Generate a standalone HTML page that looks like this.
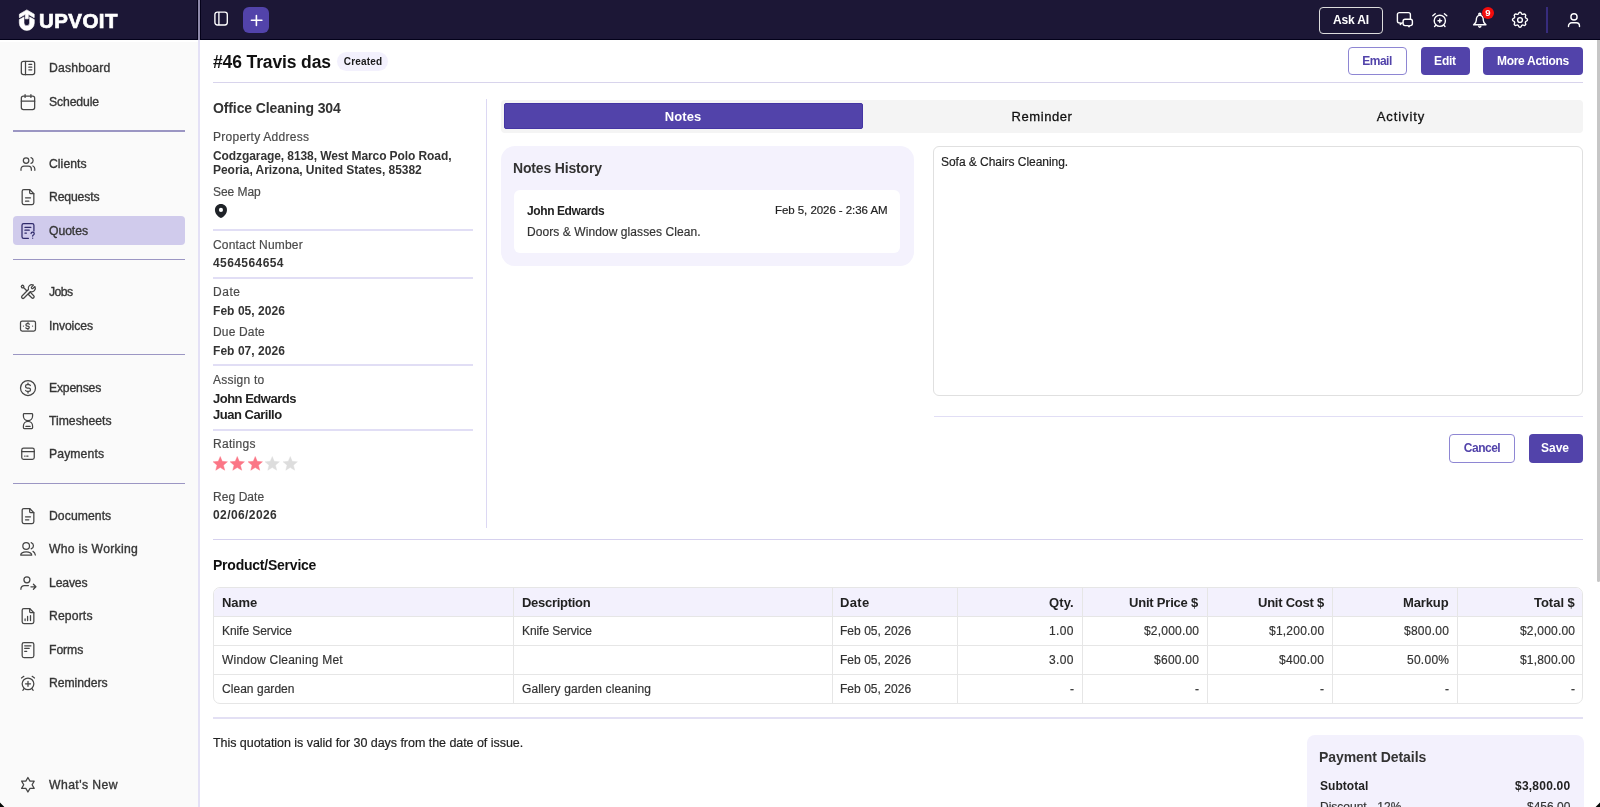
<!DOCTYPE html>
<html><head><meta charset="utf-8"><title>Quote #46</title>
<style>
html,body{margin:0;padding:0;}
body{width:1600px;height:807px;overflow:hidden;position:relative;background:#fff;font-family:"Liberation Sans", sans-serif;}
.t{position:absolute;line-height:1;white-space:nowrap;will-change:transform;}
.b{position:absolute;}
.s{position:absolute;overflow:visible;}
</style></head><body>
<div class="b" style="left:0px;top:0px;width:1600px;height:40px;background:#1c1736;"></div>
<div class="b" style="left:0px;top:39px;width:1600px;height:1px;background:#03011a;"></div>
<div class="b" style="left:197px;top:0px;width:4px;height:40px;background:#05021a;"></div>
<div class="b" style="left:198px;top:0px;width:2px;height:40px;background:#8e89aa;"></div>
<svg class="s" style="left:0px;top:0px;" width="60" height="40" viewBox="0 0 60 40" fill="none"><path fill="#fff" stroke="#fff" stroke-width="0.7" stroke-linejoin="round" d="M26.8 9.9 L34.2 14.2 L34.2 17.7 L28.3 14.3 L28.3 18.8 L25.3 18.8 L25.3 14.3 L19.4 17.7 L19.4 14.2 Z"/>
<path fill="#fff" stroke="#fff" stroke-width="0.6" stroke-linejoin="round" d="M19.3 19.6 L24 16.9 L24 22.9 A2.8 2.8 0 0 0 29.6 22.9 L29.6 16.9 L34.3 19.6 L34.3 22.9 A7.5 7.5 0 0 1 19.3 22.9 Z"/></svg>
<div class="t" style="left:39.20px;top:10.65px;font-size:20.5px;font-weight:700;color:#fff;letter-spacing:0.434px;-webkit-text-stroke:0.7px #fff;">UPVOIT</div>
<svg class="s" style="left:211px;top:9px;" width="20" height="20" viewBox="0 0 20 20" fill="none"><rect x="3.9" y="3.1" width="12.4" height="12.9" rx="2.4" stroke="#fff" stroke-width="1.35"/><path d="M7.9 3.1v12.9" stroke="#fff" stroke-width="1.35"/></svg>
<div class="b" style="left:242.7px;top:6.9px;width:26.4px;height:26.6px;background:#5243aa;border-radius:6px;"></div>
<svg class="s" style="left:242.7px;top:6.9px;" width="27" height="27" viewBox="0 0 27 27" fill="none"><path d="M13.4 8.6v9.9M8.4 13.2h10.5" stroke="#fff" stroke-width="1.6" stroke-linecap="round"/></svg>
<div class="b" style="left:1319px;top:7px;width:64px;height:27px;border:1.5px solid #dcdcdc;border-radius:4px;box-sizing:border-box;"></div>
<div class="t" style="left:1050.93px;width:600px;text-align:center;top:14.24px;font-size:12px;font-weight:700;color:#fff;letter-spacing:-0.141px;">Ask AI</div>
<svg class="s" style="left:1394px;top:10px;" width="20" height="20" viewBox="0 0 20 20" fill="none"><path stroke="#fff" stroke-width="1.4" stroke-linecap="round" stroke-linejoin="round" d="M5.4 2.6h9a2 2 0 0 1 2 2v6.3a2 2 0 0 1-2 2h-6.6l-1.5 1.5v-1.5h-0.9a2 2 0 0 1-2-2v-6.3a2 2 0 0 1 2-2z"/><path stroke="#fff" stroke-width="1.4" stroke-linecap="round" stroke-linejoin="round" d="M11.1 9.3h5.3a2 2 0 0 1 2 2v2.3a2 2 0 0 1-2 2h-0.7l-0.6 1.2l-1.2-1.2h-2.8a2 2 0 0 1-2-2v-2.3a2 2 0 0 1 2-2z" fill="#1c1736"/></svg>
<svg class="s" style="left:1430px;top:10px;" width="20" height="20" viewBox="0 0 20 20" fill="none"><circle stroke="#fff" stroke-width="1.4" stroke-linecap="round" stroke-linejoin="round" cx="9.8" cy="10.8" r="5.6"/><path stroke="#fff" stroke-width="1.4" stroke-linecap="round" stroke-linejoin="round" d="M9.8 9v3.6M8 10.8h3.6M2.8 5.8l2.4-2M16.8 5.8l-2.4-2M5.8 15.1l-1.2 1.4M13.8 15.1l1.2 1.4"/></svg>
<svg class="s" style="left:1470px;top:10px;" width="20" height="20" viewBox="0 0 20 20" fill="none"><path stroke="#fff" stroke-width="1.4" stroke-linecap="round" stroke-linejoin="round" d="M9.8 5.4C6.9 5.4 6.3 8 6.3 10.3C6.3 12.4 5.3 13.7 3.6 14.8H16C14.3 13.7 13.3 12.4 13.3 10.3C13.3 8 12.7 5.4 9.8 5.4Z"/><circle stroke="#fff" stroke-width="1.4" stroke-linecap="round" stroke-linejoin="round" cx="9.8" cy="4.2" r="1"/><path stroke="#fff" stroke-width="1.4" stroke-linecap="round" stroke-linejoin="round" d="M8.7 16.1a1.1 1.1 0 0 0 2.2 0"/></svg>
<div class="b" style="left:1481.6px;top:6.6px;width:12px;height:12px;border-radius:50%;background:#f20c0c;"></div>
<div class="t" style="left:1187.60px;width:600px;text-align:center;top:8.26px;font-size:9.5px;font-weight:700;color:#fff;">9</div>
<svg class="s" style="left:1510px;top:10px;" width="20" height="20" viewBox="0 0 20 20" fill="none"><path stroke="#fff" stroke-width="1.4" stroke-linecap="round" stroke-linejoin="round" d="M8.6 3.3c.36-1.47 2.44-1.47 2.8 0a1.44 1.44 0 0 0 2.15.89c1.29-.79 2.77.68 1.98 1.98a1.44 1.44 0 0 0 .89 2.15c1.47.36 1.47 2.44 0 2.8a1.44 1.44 0 0 0-.89 2.15c.79 1.29-.68 2.77-1.98 1.98a1.44 1.44 0 0 0-2.15.89c-.36 1.47-2.44 1.47-2.8 0a1.44 1.44 0 0 0-2.15-.89c-1.29.79-2.77-.68-1.98-1.98a1.44 1.44 0 0 0-.89-2.15c-1.47-.36-1.47-2.44 0-2.8a1.44 1.44 0 0 0 .89-2.15c-.79-1.29.68-2.77 1.98-1.98c.83.51 1.91.06 2.15-.89z"/><circle stroke="#fff" stroke-width="1.4" stroke-linecap="round" stroke-linejoin="round" cx="10" cy="10" r="2.4"/></svg>
<div class="b" style="left:1546px;top:6.9px;width:2px;height:26.6px;background:#372c7d;"></div>
<svg class="s" style="left:1564px;top:10px;" width="20" height="20" viewBox="0 0 20 20" fill="none"><circle stroke="#fff" stroke-width="1.4" stroke-linecap="round" stroke-linejoin="round" cx="10" cy="6.9" r="3.1"/><path stroke="#fff" stroke-width="1.4" stroke-linecap="round" stroke-linejoin="round" d="M4.5 16.6v-0.7a3.2 3.2 0 0 1 3.2-3.2h4.6a3.2 3.2 0 0 1 3.2 3.2v0.7"/></svg>
<div class="b" style="left:0px;top:40px;width:198px;height:2px;background:#fff;"></div>
<div class="b" style="left:0px;top:42px;width:198px;height:765px;background:#fafafa;"></div>
<div class="b" style="left:198px;top:40px;width:2px;height:767px;background:#e4e1f6;"></div>
<div class="b" style="left:12.5px;top:215.5px;width:172.5px;height:29.5px;background:#d0cbec;border-radius:4px;"></div>
<div class="b" style="left:12.5px;top:130px;width:172.5px;height:1.7px;background:#9b96c3;"></div>
<div class="b" style="left:12.5px;top:258.5px;width:172.5px;height:1.7px;background:#9b96c3;"></div>
<div class="b" style="left:12.5px;top:353.5px;width:172.5px;height:1.7px;background:#9b96c3;"></div>
<div class="b" style="left:12.5px;top:482.5px;width:172.5px;height:1.7px;background:#9b96c3;"></div>
<svg class="s" style="left:17.5px;top:58.400000000000006px;" width="20" height="20" viewBox="0 0 24 24" fill="none"><rect stroke="#454545" stroke-width="1.5" stroke-linecap="round" stroke-linejoin="round" x="4" y="4" width="16" height="16" rx="2.5"/><path stroke="#454545" stroke-width="1.5" stroke-linecap="round" stroke-linejoin="round" d="M9 4v16M13 7.5h3.5M13 11h3.5M13 14.2h3.5"/></svg>
<div class="t" style="left:49.40px;top:62.47px;font-size:12.2px;font-weight:400;color:#363636;letter-spacing:0.222px;-webkit-text-stroke:0.35px #363636;">Dashboard</div>
<svg class="s" style="left:17.5px;top:92px;" width="20" height="20" viewBox="0 0 24 24" fill="none"><rect stroke="#454545" stroke-width="1.5" stroke-linecap="round" stroke-linejoin="round" x="4" y="5" width="16" height="16" rx="2.5"/><path stroke="#454545" stroke-width="1.5" stroke-linecap="round" stroke-linejoin="round" d="M8.5 3v3.5M15.5 3v3.5M4 11h16"/></svg>
<div class="t" style="left:49.40px;top:96.07px;font-size:12.2px;font-weight:400;color:#363636;letter-spacing:-0.118px;-webkit-text-stroke:0.35px #363636;">Schedule</div>
<svg class="s" style="left:17.5px;top:153.5px;" width="20" height="20" viewBox="0 0 24 24" fill="none"><circle stroke="#454545" stroke-width="1.5" stroke-linecap="round" stroke-linejoin="round" cx="9.7" cy="7.9" r="3.3"/><path stroke="#454545" stroke-width="1.5" stroke-linecap="round" stroke-linejoin="round" d="M3.6 19.6v-1.6a3.6 3.6 0 0 1 3.6-3.6h5.2a3.6 3.6 0 0 1 3.6 3.6v1.6M15.6 4.4a3.6 3.6 0 0 1 0 6.9M17.9 14.4a3.8 3.8 0 0 1 2.3 3.6v1.6"/></svg>
<div class="t" style="left:49.40px;top:157.57px;font-size:12.2px;font-weight:400;color:#363636;letter-spacing:0.056px;-webkit-text-stroke:0.35px #363636;">Clients</div>
<svg class="s" style="left:17.5px;top:187px;" width="20" height="20" viewBox="0 0 24 24" fill="none"><path stroke="#454545" stroke-width="1.5" stroke-linecap="round" stroke-linejoin="round" d="M14 3v4a1 1 0 0 0 1 1h4"/><path stroke="#454545" stroke-width="1.5" stroke-linecap="round" stroke-linejoin="round" d="M17 21h-10a2 2 0 0 1-2-2v-14a2 2 0 0 1 2-2h7l5 5v11a2 2 0 0 1-2 2z"/><path stroke="#454545" stroke-width="1.5" stroke-linecap="round" stroke-linejoin="round" d="M9 13h6M9 17h4"/></svg>
<div class="t" style="left:49.40px;top:191.07px;font-size:12.2px;font-weight:400;color:#363636;letter-spacing:-0.129px;-webkit-text-stroke:0.35px #363636;">Requests</div>
<svg class="s" style="left:17.5px;top:220.5px;" width="20" height="20" viewBox="0 0 24 24" fill="none"><path stroke="#2f2a6b" stroke-width="1.5" stroke-linecap="round" stroke-linejoin="round" d="M12.5 20.8h-5.7a2 2 0 0 1-2-2v-13.8a2 2 0 0 1 2-2h10.3a2 2 0 0 1 2 2v7"/><path stroke="#2f2a6b" stroke-width="1.5" stroke-linecap="round" stroke-linejoin="round" d="M8.3 7.6h7.2M8.3 11h5.2M8.3 14.4h1.8"/><path stroke="#2f2a6b" stroke-width="1.5" stroke-linecap="round" stroke-linejoin="round" d="M17.6 20.6v.01M15.7 15a1.9 1.9 0 1 1 2.6 1.9c-.5.3-.7.6-.7 1.1"/></svg>
<div class="t" style="left:49.40px;top:224.57px;font-size:12.2px;font-weight:400;color:#363636;letter-spacing:-0.059px;-webkit-text-stroke:0.35px #363636;">Quotes</div>
<svg class="s" style="left:17.5px;top:282px;" width="20" height="20" viewBox="0 0 24 24" fill="none"><g transform="translate(5.5 5.5) rotate(45)"><circle stroke="#454545" stroke-width="1.5" stroke-linecap="round" stroke-linejoin="round" cx="0" cy="0" r="1.5"/><path stroke="#454545" stroke-width="1.5" stroke-linecap="round" stroke-linejoin="round" d="M1.6 0L7.5 0"/><path stroke="#454545" stroke-width="1.5" stroke-linecap="round" stroke-linejoin="round" d="M11.2 -1.7L17.2 -1.7A1.7 1.7 0 0 1 17.2 1.7L11.2 1.7Z"/></g><g transform="translate(13.3 10.7) rotate(-45)"><path stroke="#454545" stroke-width="1.5" stroke-linecap="round" stroke-linejoin="round" d="M0.6 -1.7A4.4 4.4 0 0 1 8.7 -1.3L5.6 -1.2A1.2 1.2 0 0 0 5.6 1.2L8.7 1.3A4.4 4.4 0 0 1 0.6 1.7L-10.3 1.7A1.7 1.7 0 0 1 -10.3 -1.7Z" fill="#fafafa"/></g></svg>
<div class="t" style="left:49.40px;top:286.07px;font-size:12.2px;font-weight:400;color:#363636;letter-spacing:-0.583px;-webkit-text-stroke:0.35px #363636;">Jobs</div>
<svg class="s" style="left:17.5px;top:315.5px;" width="20" height="20" viewBox="0 0 24 24" fill="none"><rect stroke="#454545" stroke-width="1.5" stroke-linecap="round" stroke-linejoin="round" x="3" y="6" width="18" height="12" rx="2"/><path stroke="#454545" stroke-width="1.5" stroke-linecap="round" stroke-linejoin="round" d="M13.6 9.8a2 2 0 0 0-1.6-.8h-1a1.5 1.5 0 0 0 0 3h1a1.5 1.5 0 0 1 0 3h-1a2 2 0 0 1-1.6-.8M12 8v1.2M12 15v1.2M6.5 12h.01M17.5 12h.01"/></svg>
<div class="t" style="left:49.40px;top:319.57px;font-size:12.2px;font-weight:400;color:#363636;letter-spacing:-0.103px;-webkit-text-stroke:0.35px #363636;">Invoices</div>
<svg class="s" style="left:17.5px;top:377.5px;" width="20" height="20" viewBox="0 0 24 24" fill="none"><circle stroke="#454545" stroke-width="1.5" stroke-linecap="round" stroke-linejoin="round" cx="12" cy="12" r="9"/><path stroke="#454545" stroke-width="1.5" stroke-linecap="round" stroke-linejoin="round" d="M14.8 9a2 2 0 0 0-1.8-1h-2a2 2 0 0 0 0 4h2a2 2 0 0 1 0 4h-2a2 2 0 0 1-1.8-1M12 6v2M12 16v2"/></svg>
<div class="t" style="left:49.40px;top:381.57px;font-size:12.2px;font-weight:400;color:#363636;letter-spacing:-0.176px;-webkit-text-stroke:0.35px #363636;">Expenses</div>
<svg class="s" style="left:17.5px;top:410.5px;" width="20" height="20" viewBox="0 0 24 24" fill="none"><path stroke="#454545" stroke-width="1.5" stroke-linecap="round" stroke-linejoin="round" d="M6.5 20v-2a5.5 5.5 0 1 1 11 0v2a1 1 0 0 1-1 1h-9a1 1 0 0 1-1-1z"/><path stroke="#454545" stroke-width="1.5" stroke-linecap="round" stroke-linejoin="round" d="M6.5 4v2a5.5 5.5 0 1 0 11 0v-2a1 1 0 0 0-1-1h-9a1 1 0 0 0-1 1z"/><path stroke="#454545" stroke-width="1.5" stroke-linecap="round" stroke-linejoin="round" d="M9.5 18.5h5"/></svg>
<div class="t" style="left:49.40px;top:414.57px;font-size:12.2px;font-weight:400;color:#363636;letter-spacing:0.006px;-webkit-text-stroke:0.35px #363636;">Timesheets</div>
<svg class="s" style="left:17.5px;top:444px;" width="20" height="20" viewBox="0 0 24 24" fill="none"><rect stroke="#454545" stroke-width="1.5" stroke-linecap="round" stroke-linejoin="round" x="4.5" y="5" width="15" height="13.5" rx="2.2"/><path stroke="#454545" stroke-width="1.5" stroke-linecap="round" stroke-linejoin="round" d="M4.5 9h15M8 14.5h.5M10.5 14.5h1.5"/></svg>
<div class="t" style="left:49.40px;top:448.07px;font-size:12.2px;font-weight:400;color:#363636;letter-spacing:0.114px;-webkit-text-stroke:0.35px #363636;">Payments</div>
<svg class="s" style="left:17.5px;top:505.5px;" width="20" height="20" viewBox="0 0 24 24" fill="none"><path stroke="#454545" stroke-width="1.5" stroke-linecap="round" stroke-linejoin="round" d="M14 3v4a1 1 0 0 0 1 1h4"/><path stroke="#454545" stroke-width="1.5" stroke-linecap="round" stroke-linejoin="round" d="M17 21h-10a2 2 0 0 1-2-2v-14a2 2 0 0 1 2-2h7l5 5v11a2 2 0 0 1-2 2z"/><path stroke="#454545" stroke-width="1.5" stroke-linecap="round" stroke-linejoin="round" d="M9 13h6M9 16.5h4"/></svg>
<div class="t" style="left:49.40px;top:509.57px;font-size:12.2px;font-weight:400;color:#363636;letter-spacing:0.070px;-webkit-text-stroke:0.35px #363636;">Documents</div>
<svg class="s" style="left:17.5px;top:539px;" width="20" height="20" viewBox="0 0 24 24" fill="none"><circle stroke="#454545" stroke-width="1.5" stroke-linecap="round" stroke-linejoin="round" cx="9.8" cy="8.3" r="4"/><path stroke="#454545" stroke-width="1.5" stroke-linecap="round" stroke-linejoin="round" d="M3.2 19.3C4 14.2 15.6 14.2 16.5 19.3Z"/><path stroke="#454545" stroke-width="1.5" stroke-linecap="round" stroke-linejoin="round" d="M15.8 4.3a4 4 0 0 1 0 7.6M18 14.8c1.5.8 2.5 2.3 2.8 4.4"/></svg>
<div class="t" style="left:49.40px;top:543.07px;font-size:12.2px;font-weight:400;color:#363636;letter-spacing:0.283px;-webkit-text-stroke:0.35px #363636;">Who is Working</div>
<svg class="s" style="left:17.5px;top:572.5px;" width="20" height="20" viewBox="0 0 24 24" fill="none"><circle stroke="#454545" stroke-width="1.5" stroke-linecap="round" stroke-linejoin="round" cx="10.7" cy="8.2" r="3.6"/><path stroke="#454545" stroke-width="1.5" stroke-linecap="round" stroke-linejoin="round" d="M3.5 19.5v-0.5a4 4 0 0 1 4-4h5M15.5 16.5h5.5M18.5 13.5l3 3l-3 3"/></svg>
<div class="t" style="left:49.40px;top:576.57px;font-size:12.2px;font-weight:400;color:#363636;letter-spacing:-0.142px;-webkit-text-stroke:0.35px #363636;">Leaves</div>
<svg class="s" style="left:17.5px;top:606px;" width="20" height="20" viewBox="0 0 24 24" fill="none"><path stroke="#454545" stroke-width="1.5" stroke-linecap="round" stroke-linejoin="round" d="M14 3v4a1 1 0 0 0 1 1h4"/><path stroke="#454545" stroke-width="1.5" stroke-linecap="round" stroke-linejoin="round" d="M17 21h-10a2 2 0 0 1-2-2v-14a2 2 0 0 1 2-2h7l5 5v11a2 2 0 0 1-2 2z"/><path stroke="#454545" stroke-width="1.5" stroke-linecap="round" stroke-linejoin="round" d="M8.5 17.5v-2M11.5 17.5v-5M15 17.5v-6"/></svg>
<div class="t" style="left:49.40px;top:610.07px;font-size:12.2px;font-weight:400;color:#363636;letter-spacing:0.135px;-webkit-text-stroke:0.35px #363636;">Reports</div>
<svg class="s" style="left:17.5px;top:639.5px;" width="20" height="20" viewBox="0 0 24 24" fill="none"><rect stroke="#454545" stroke-width="1.5" stroke-linecap="round" stroke-linejoin="round" x="5" y="3" width="14" height="18" rx="2.2"/><path stroke="#454545" stroke-width="1.5" stroke-linecap="round" stroke-linejoin="round" d="M8 7h7.5M8 10h5.5M8 13.5h2.5"/></svg>
<div class="t" style="left:49.40px;top:643.57px;font-size:12.2px;font-weight:400;color:#363636;letter-spacing:-0.058px;-webkit-text-stroke:0.35px #363636;">Forms</div>
<svg class="s" style="left:17.5px;top:672.5px;" width="20" height="20" viewBox="0 0 24 24" fill="none"><circle stroke="#454545" stroke-width="1.5" stroke-linecap="round" stroke-linejoin="round" cx="12" cy="13" r="7"/><path stroke="#454545" stroke-width="1.5" stroke-linecap="round" stroke-linejoin="round" d="M12 10v6M9 13h6M7 4l-2.8 2M17 4l2.8 2M7.3 18.8l-1.5 2M16.7 18.8l1.5 2"/></svg>
<div class="t" style="left:49.40px;top:676.57px;font-size:12.2px;font-weight:400;color:#363636;letter-spacing:-0.042px;-webkit-text-stroke:0.35px #363636;">Reminders</div>
<svg class="s" style="left:17.5px;top:774.5px;" width="20" height="20" viewBox="0 0 24 24" fill="none"><path stroke="#454545" stroke-width="1.5" stroke-linecap="round" stroke-linejoin="round" d="M11.90 3.00L14.41 7.35L19.43 7.35L16.92 11.70L19.43 16.05L14.41 16.05L11.90 20.40L9.39 16.05L4.37 16.05L6.88 11.70L4.37 7.35L9.39 7.35Z"/></svg>
<div class="t" style="left:49.40px;top:778.57px;font-size:12.2px;font-weight:400;color:#363636;letter-spacing:0.429px;-webkit-text-stroke:0.35px #363636;">What's New</div>
<div class="t" style="left:212.90px;top:53.79px;font-size:17.5px;font-weight:700;color:#111;letter-spacing:-0.129px;">#46 Travis das</div>
<div class="b" style="left:337px;top:52px;width:51px;height:19px;background:#f3f1fd;border-radius:10px;"></div>
<div class="t" style="left:62.59px;width:600px;text-align:center;top:56.63px;font-size:10px;font-weight:700;color:#1a1a1a;letter-spacing:0.175px;">Created</div>
<div class="b" style="left:1348px;top:47px;width:59px;height:28px;border:1px solid #8e86d3;border-radius:4px;box-sizing:border-box;background:#fff;"></div>
<div class="t" style="left:1077.46px;width:600px;text-align:center;top:55.34px;font-size:12px;font-weight:700;color:#5243aa;letter-spacing:-0.479px;">Email</div>
<div class="b" style="left:1421px;top:47px;width:49px;height:28px;background:#5243aa;border-radius:4px;"></div>
<div class="t" style="left:1145.09px;width:600px;text-align:center;top:55.34px;font-size:12px;font-weight:700;color:#fff;letter-spacing:-0.224px;">Edit</div>
<div class="b" style="left:1483px;top:47px;width:100px;height:28px;background:#5243aa;border-radius:4px;"></div>
<div class="t" style="left:1233.05px;width:600px;text-align:center;top:55.34px;font-size:12px;font-weight:700;color:#fff;letter-spacing:-0.306px;">More Actions</div>
<div class="b" style="left:213px;top:82px;width:1370px;height:1px;background:#d8d4ec;"></div>
<div class="t" style="left:212.90px;top:101.15px;font-size:14px;font-weight:700;color:#333;letter-spacing:-0.119px;">Office Cleaning 304</div>
<div class="t" style="left:212.90px;top:131.04px;font-size:12px;font-weight:400;color:#4a4a4a;letter-spacing:0.257px;-webkit-text-stroke:0.18px #4a4a4a;">Property Address</div>
<div class="t" style="left:212.90px;top:149.64px;font-size:12px;font-weight:700;color:#333;letter-spacing:-0.088px;">Codzgarage, 8138, West Marco Polo Road,</div>
<div class="t" style="left:212.90px;top:164.24px;font-size:12px;font-weight:700;color:#333;letter-spacing:-0.042px;">Peoria, Arizona, United States, 85382</div>
<div class="t" style="left:212.90px;top:186.24px;font-size:12px;font-weight:400;color:#4a4a4a;letter-spacing:-0.055px;-webkit-text-stroke:0.18px #4a4a4a;">See Map</div>
<svg class="s" style="left:213px;top:203px;" width="16" height="17" viewBox="0 0 16 17" fill="none"><path fill="#1f2328" d="M7.95 1.1C4.5 1.1 1.95 3.6 1.95 6.9C1.95 10.4 4.6 13.6 7.95 15C11.3 13.6 13.95 10.4 13.95 6.9C13.95 3.6 11.4 1.1 7.95 1.1Z"/><circle cx="7.95" cy="6.9" r="2.05" fill="#fff"/></svg>
<div class="b" style="left:213px;top:229px;width:260px;height:2px;background:#e1def5;"></div>
<div class="t" style="left:212.90px;top:238.64px;font-size:12px;font-weight:400;color:#4a4a4a;letter-spacing:0.179px;-webkit-text-stroke:0.18px #4a4a4a;">Contact Number</div>
<div class="t" style="left:212.90px;top:256.94px;font-size:12px;font-weight:700;color:#333;letter-spacing:0.417px;">4564564654</div>
<div class="b" style="left:213px;top:277px;width:260px;height:2px;background:#e1def5;"></div>
<div class="t" style="left:212.90px;top:286.44px;font-size:12px;font-weight:400;color:#4a4a4a;letter-spacing:0.547px;-webkit-text-stroke:0.18px #4a4a4a;">Date</div>
<div class="t" style="left:212.90px;top:304.64px;font-size:12px;font-weight:700;color:#333;letter-spacing:0.055px;">Feb 05, 2026</div>
<div class="t" style="left:212.90px;top:326.44px;font-size:12px;font-weight:400;color:#4a4a4a;letter-spacing:0.157px;-webkit-text-stroke:0.18px #4a4a4a;">Due Date</div>
<div class="t" style="left:212.90px;top:344.64px;font-size:12px;font-weight:700;color:#333;letter-spacing:0.055px;">Feb 07, 2026</div>
<div class="b" style="left:213px;top:364px;width:260px;height:2px;background:#e1def5;"></div>
<div class="t" style="left:212.90px;top:373.84px;font-size:12px;font-weight:400;color:#4a4a4a;letter-spacing:0.230px;-webkit-text-stroke:0.18px #4a4a4a;">Assign to</div>
<div class="t" style="left:212.90px;top:391.90px;font-size:13px;font-weight:700;color:#222;letter-spacing:-0.496px;">John Edwards</div>
<div class="t" style="left:212.90px;top:407.70px;font-size:13px;font-weight:700;color:#222;letter-spacing:-0.484px;">Juan Carillo</div>
<div class="b" style="left:213px;top:428.5px;width:260px;height:2px;background:#e1def5;"></div>
<div class="t" style="left:212.90px;top:438.04px;font-size:12px;font-weight:400;color:#4a4a4a;letter-spacing:0.285px;-webkit-text-stroke:0.18px #4a4a4a;">Ratings</div>
<svg class="s" style="left:213.0px;top:455.5px;" width="15" height="15" viewBox="0 0 15 15" fill="none"><path fill="#fb7686" d="M7.25 0.50 L9.25 5.35 L14.48 5.75 L10.48 9.15 L11.72 14.25 L7.25 11.50 L2.78 14.25 L4.02 9.15 L0.02 5.75 L5.25 5.35Z" stroke="#fb7686" stroke-width="0.4" stroke-linejoin="round"/></svg>
<svg class="s" style="left:230.45px;top:455.5px;" width="15" height="15" viewBox="0 0 15 15" fill="none"><path fill="#fb7686" d="M7.25 0.50 L9.25 5.35 L14.48 5.75 L10.48 9.15 L11.72 14.25 L7.25 11.50 L2.78 14.25 L4.02 9.15 L0.02 5.75 L5.25 5.35Z" stroke="#fb7686" stroke-width="0.4" stroke-linejoin="round"/></svg>
<svg class="s" style="left:247.9px;top:455.5px;" width="15" height="15" viewBox="0 0 15 15" fill="none"><path fill="#fb7686" d="M7.25 0.50 L9.25 5.35 L14.48 5.75 L10.48 9.15 L11.72 14.25 L7.25 11.50 L2.78 14.25 L4.02 9.15 L0.02 5.75 L5.25 5.35Z" stroke="#fb7686" stroke-width="0.4" stroke-linejoin="round"/></svg>
<svg class="s" style="left:265.35px;top:455.5px;" width="15" height="15" viewBox="0 0 15 15" fill="none"><path fill="#dddddd" d="M7.25 0.50 L9.25 5.35 L14.48 5.75 L10.48 9.15 L11.72 14.25 L7.25 11.50 L2.78 14.25 L4.02 9.15 L0.02 5.75 L5.25 5.35Z" stroke="#dddddd" stroke-width="0.4" stroke-linejoin="round"/></svg>
<svg class="s" style="left:282.8px;top:455.5px;" width="15" height="15" viewBox="0 0 15 15" fill="none"><path fill="#dddddd" d="M7.25 0.50 L9.25 5.35 L14.48 5.75 L10.48 9.15 L11.72 14.25 L7.25 11.50 L2.78 14.25 L4.02 9.15 L0.02 5.75 L5.25 5.35Z" stroke="#dddddd" stroke-width="0.4" stroke-linejoin="round"/></svg>
<div class="t" style="left:212.90px;top:490.74px;font-size:12px;font-weight:400;color:#4a4a4a;letter-spacing:0.071px;-webkit-text-stroke:0.18px #4a4a4a;">Reg Date</div>
<div class="t" style="left:212.90px;top:508.64px;font-size:12px;font-weight:700;color:#333;letter-spacing:0.415px;">02/06/2026</div>
<div class="b" style="left:486px;top:99px;width:1px;height:429px;background:#dcd8f3;"></div>
<div class="b" style="left:501px;top:100px;width:1082px;height:32.5px;background:#f4f4f4;border-radius:4px;"></div>
<div class="b" style="left:504px;top:102.8px;width:358.5px;height:26.4px;background:#5243aa;border:1px solid #4435a3;box-sizing:border-box;border-radius:2px;"></div>
<div class="t" style="left:383.16px;width:600px;text-align:center;top:109.90px;font-size:13px;font-weight:700;color:#fff;letter-spacing:0.119px;">Notes</div>
<div class="t" style="left:742.28px;width:600px;text-align:center;top:110.30px;font-size:13px;font-weight:400;color:#111;letter-spacing:0.563px;-webkit-text-stroke:0.3px #111;">Reminder</div>
<div class="t" style="left:1100.87px;width:600px;text-align:center;top:110.20px;font-size:13px;font-weight:400;color:#111;letter-spacing:0.933px;-webkit-text-stroke:0.3px #111;">Activity</div>
<div class="b" style="left:500.5px;top:146px;width:413px;height:120px;background:#f4f2fd;border-radius:14px;"></div>
<div class="t" style="left:512.50px;top:161.15px;font-size:14px;font-weight:700;color:#333;letter-spacing:-0.169px;">Notes History</div>
<div class="b" style="left:514px;top:189.5px;width:386px;height:63.5px;background:#fff;border-radius:6px;"></div>
<div class="t" style="left:527.20px;top:204.84px;font-size:12px;font-weight:700;color:#222;letter-spacing:-0.401px;">John Edwards</div>
<div class="t" style="right:712.86px;top:204.77px;font-size:11.5px;font-weight:400;color:#222;letter-spacing:-0.060px;-webkit-text-stroke:0.18px #222;">Feb 5, 2026 - 2:36 AM</div>
<div class="t" style="left:527.20px;top:226.34px;font-size:12px;font-weight:400;color:#333;letter-spacing:0.075px;-webkit-text-stroke:0.18px #333;">Doors &amp; Window glasses Clean.</div>
<div class="b" style="left:933.3px;top:146px;width:650px;height:250px;border:1.5px solid #e0e0e0;border-radius:6px;box-sizing:border-box;background:#fff;"></div>
<div class="t" style="left:941.00px;top:155.84px;font-size:12px;font-weight:400;color:#222;letter-spacing:-0.040px;-webkit-text-stroke:0.18px #222;">Sofa &amp; Chairs Cleaning.</div>
<div class="b" style="left:934px;top:416px;width:649px;height:1px;background:#e1def5;"></div>
<div class="b" style="left:1449px;top:434px;width:66px;height:28.5px;border:1px solid #8e86d3;border-radius:4px;box-sizing:border-box;background:#fff;"></div>
<div class="t" style="left:1181.84px;width:600px;text-align:center;top:442.24px;font-size:12px;font-weight:700;color:#5243aa;letter-spacing:-0.512px;">Cancel</div>
<div class="b" style="left:1528.5px;top:434px;width:54.5px;height:28.5px;background:#5243aa;border-radius:4px;"></div>
<div class="t" style="left:1255.48px;width:600px;text-align:center;top:442.24px;font-size:12px;font-weight:700;color:#fff;letter-spacing:-0.044px;">Save</div>
<div class="b" style="left:213px;top:539px;width:1370px;height:1px;background:#d6d1ee;"></div>
<div class="t" style="left:212.90px;top:558.15px;font-size:14px;font-weight:700;color:#111;letter-spacing:-0.229px;">Product/Service</div>
<div class="b" style="left:213px;top:587px;width:1370px;height:117px;border:1px solid #e6e6e6;border-radius:7px;box-sizing:border-box;overflow:hidden;"><div style="position:absolute;left:0;top:0;right:0;height:29px;background:#f3f1fd;"></div></div>
<div class="b" style="left:214px;top:616px;width:1368px;height:1px;background:#e6e6e6;"></div>
<div class="b" style="left:214px;top:645px;width:1368px;height:1px;background:#e6e6e6;"></div>
<div class="b" style="left:214px;top:674px;width:1368px;height:1px;background:#e6e6e6;"></div>
<div class="b" style="left:513px;top:588px;width:1px;height:115px;background:#e6e6e6;"></div>
<div class="b" style="left:832px;top:588px;width:1px;height:115px;background:#e6e6e6;"></div>
<div class="b" style="left:957px;top:588px;width:1px;height:115px;background:#e6e6e6;"></div>
<div class="b" style="left:1082px;top:588px;width:1px;height:115px;background:#e6e6e6;"></div>
<div class="b" style="left:1207px;top:588px;width:1px;height:115px;background:#e6e6e6;"></div>
<div class="b" style="left:1332px;top:588px;width:1px;height:115px;background:#e6e6e6;"></div>
<div class="b" style="left:1457px;top:588px;width:1px;height:115px;background:#e6e6e6;"></div>
<div class="t" style="left:221.80px;top:596.00px;font-size:13px;font-weight:700;color:#222;letter-spacing:-0.074px;">Name</div>
<div class="t" style="left:522.00px;top:596.00px;font-size:13px;font-weight:700;color:#222;letter-spacing:-0.292px;">Description</div>
<div class="t" style="left:840.00px;top:596.00px;font-size:13px;font-weight:700;color:#222;letter-spacing:0.371px;">Date</div>
<div class="t" style="right:526.38px;top:596.00px;font-size:13px;font-weight:700;color:#222;letter-spacing:0.124px;">Qty.</div>
<div class="t" style="right:401.71px;top:596.00px;font-size:13px;font-weight:700;color:#222;letter-spacing:-0.212px;">Unit Price $</div>
<div class="t" style="right:276.44px;top:596.00px;font-size:13px;font-weight:700;color:#222;letter-spacing:-0.242px;">Unit Cost $</div>
<div class="t" style="right:151.43px;top:596.00px;font-size:13px;font-weight:700;color:#222;letter-spacing:-0.127px;">Markup</div>
<div class="t" style="right:25.52px;top:596.00px;font-size:13px;font-weight:700;color:#222;letter-spacing:-0.023px;">Total $</div>
<div class="t" style="left:221.80px;top:624.84px;font-size:12px;font-weight:400;color:#333;letter-spacing:-0.075px;-webkit-text-stroke:0.18px #333;">Knife Service</div>
<div class="t" style="left:522.00px;top:624.84px;font-size:12px;font-weight:400;color:#333;letter-spacing:-0.075px;-webkit-text-stroke:0.18px #333;">Knife Service</div>
<div class="t" style="left:840.00px;top:624.84px;font-size:12px;font-weight:400;color:#333;letter-spacing:0.033px;-webkit-text-stroke:0.18px #333;">Feb 05, 2026</div>
<div class="t" style="right:526.12px;top:624.84px;font-size:12px;font-weight:400;color:#333;letter-spacing:0.380px;-webkit-text-stroke:0.18px #333;">1.00</div>
<div class="t" style="right:401.30px;top:624.84px;font-size:12px;font-weight:400;color:#333;letter-spacing:0.201px;-webkit-text-stroke:0.18px #333;">$2,000.00</div>
<div class="t" style="right:275.97px;top:624.84px;font-size:12px;font-weight:400;color:#333;letter-spacing:0.226px;-webkit-text-stroke:0.18px #333;">$1,200.00</div>
<div class="t" style="right:151.05px;top:624.84px;font-size:12px;font-weight:400;color:#333;letter-spacing:0.252px;-webkit-text-stroke:0.18px #333;">$800.00</div>
<div class="t" style="right:25.30px;top:624.84px;font-size:12px;font-weight:400;color:#333;letter-spacing:0.201px;-webkit-text-stroke:0.18px #333;">$2,000.00</div>
<div class="t" style="left:221.80px;top:654.04px;font-size:12px;font-weight:400;color:#333;letter-spacing:0.221px;-webkit-text-stroke:0.18px #333;">Window Cleaning Met</div>
<div class="t" style="left:522.00px;top:654.04px;font-size:12px;font-weight:400;color:#333;-webkit-text-stroke:0.18px #333;"></div>
<div class="t" style="left:840.00px;top:654.04px;font-size:12px;font-weight:400;color:#333;letter-spacing:0.033px;-webkit-text-stroke:0.18px #333;">Feb 05, 2026</div>
<div class="t" style="right:526.12px;top:654.04px;font-size:12px;font-weight:400;color:#333;letter-spacing:0.380px;-webkit-text-stroke:0.18px #333;">3.00</div>
<div class="t" style="right:401.23px;top:654.04px;font-size:12px;font-weight:400;color:#333;letter-spacing:0.268px;-webkit-text-stroke:0.18px #333;">$600.00</div>
<div class="t" style="right:275.93px;top:654.04px;font-size:12px;font-weight:400;color:#333;letter-spacing:0.268px;-webkit-text-stroke:0.18px #333;">$400.00</div>
<div class="t" style="right:151.04px;top:654.04px;font-size:12px;font-weight:400;color:#333;letter-spacing:0.259px;-webkit-text-stroke:0.18px #333;">50.00%</div>
<div class="t" style="right:25.31px;top:654.04px;font-size:12px;font-weight:400;color:#333;letter-spacing:0.189px;-webkit-text-stroke:0.18px #333;">$1,800.00</div>
<div class="t" style="left:221.80px;top:683.24px;font-size:12px;font-weight:400;color:#333;letter-spacing:0.040px;-webkit-text-stroke:0.18px #333;">Clean garden</div>
<div class="t" style="left:522.00px;top:683.24px;font-size:12px;font-weight:400;color:#333;letter-spacing:0.102px;-webkit-text-stroke:0.18px #333;">Gallery garden cleaning</div>
<div class="t" style="left:840.00px;top:683.24px;font-size:12px;font-weight:400;color:#333;letter-spacing:0.033px;-webkit-text-stroke:0.18px #333;">Feb 05, 2026</div>
<div class="t" style="right:526.50px;top:683.24px;font-size:12px;font-weight:400;color:#333;-webkit-text-stroke:0.18px #333;">-</div>
<div class="t" style="right:401.50px;top:683.24px;font-size:12px;font-weight:400;color:#333;-webkit-text-stroke:0.18px #333;">-</div>
<div class="t" style="right:276.20px;top:683.24px;font-size:12px;font-weight:400;color:#333;-webkit-text-stroke:0.18px #333;">-</div>
<div class="t" style="right:151.30px;top:683.24px;font-size:12px;font-weight:400;color:#333;-webkit-text-stroke:0.18px #333;">-</div>
<div class="t" style="right:25.50px;top:683.24px;font-size:12px;font-weight:400;color:#333;-webkit-text-stroke:0.18px #333;">-</div>
<div class="b" style="left:213px;top:717px;width:1370px;height:2px;background:#e3e0f4;"></div>
<div class="t" style="left:212.90px;top:736.62px;font-size:12.5px;font-weight:400;color:#222;letter-spacing:-0.043px;-webkit-text-stroke:0.18px #222;">This quotation is valid for 30 days from the date of issue.</div>
<div class="b" style="left:1306.5px;top:735px;width:277px;height:90px;background:#f3f1fd;border-radius:8px;"></div>
<div class="t" style="left:1318.50px;top:749.75px;font-size:14px;font-weight:700;color:#333;letter-spacing:-0.062px;">Payment Details</div>
<div class="t" style="left:1319.60px;top:780.24px;font-size:12px;font-weight:700;color:#222;letter-spacing:0.043px;">Subtotal</div>
<div class="t" style="right:29.67px;top:780.24px;font-size:12px;font-weight:700;color:#222;letter-spacing:0.226px;">$3,800.00</div>
<div class="t" style="left:1319.90px;top:800.84px;font-size:12px;font-weight:400;color:#333;-webkit-text-stroke:0.18px #333;">Discount - 12%</div>
<div class="t" style="right:29.90px;top:800.84px;font-size:12px;font-weight:400;color:#333;-webkit-text-stroke:0.18px #333;">$456.00</div>
<svg class="s" style="left:0px;top:800px;" width="8" height="7" viewBox="0 0 8 7" fill="none"><path d="M0 1.8L5.2 7" stroke="#fff" stroke-width="1"/><path d="M0 2.6L4.4 7H0z" fill="#050a07"/></svg>
<svg class="s" style="left:1592px;top:800px;" width="8" height="7" viewBox="0 0 8 7" fill="none"><path d="M8 1.8L2.8 7" stroke="#fff" stroke-width="1"/><path d="M8 2.6L3.6 7H8z" fill="#050a07"/></svg>
<div class="b" style="left:1597px;top:40px;width:3px;height:542px;background:#c6c6c6;border-radius:0 0 2px 2px;"></div>
</body></html>
